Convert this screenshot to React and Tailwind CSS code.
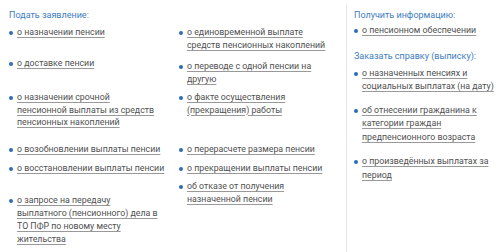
import React from 'react';

const font = { fontFamily: 'Roboto, "Liberation Sans", sans-serif' };

// lines are written out so wrapping matches the original exactly
const Item = ({ lines, className = '' }) => (
    <div className={`flex items-start ${className}`}>
        <span className="mt-[5px] mr-[4px] h-[4px] w-[4px] shrink-0 rounded-full bg-[#2e6cb3]" />
        <a href="#" className="whitespace-nowrap text-[#505050] underline decoration-[#999] underline-offset-[2px]">
            {lines.map((line, i) => (
                <React.Fragment key={i}>
                    {i > 0 && <br />}
                    {line}
                </React.Fragment>
            ))}
        </a>
    </div>
);

const Title = ({ children, className = '' }) => (
    <h3 className={`text-[9px] leading-[14px] text-[#3e7dc1] ${className}`}>{children}</h3>
);

const App = () => {
    return (
        <div className="flex h-[252px] w-[500px] overflow-hidden bg-white text-[8.8px] leading-[12.5px]" style={font}>
            {/* left column */}
            <div className="flex w-[170px] flex-col pl-[9px] pt-[8px]">
                <Title>Подать заявление:</Title>
                <Item className="mt-[4px]" lines={['о назначении пенсии']} />
                <Item className="mt-[18px]" lines={['о доставке пенсии']} />
                <Item
                    className="mt-[22px]"
                    lines={['о назначении срочной', 'пенсионной выплаты из средств', 'пенсионных накоплений']}
                />
                <Item className="mt-[14px]" lines={['о возобновлении выплаты пенсии']} />
                <Item className="mt-[6.5px]" lines={['о восстановлении выплаты пенсии']} />
                <div className="mt-[20px] leading-[13px]">
                    <Item
                        lines={[
                            'о запросе на передачу',
                            'выплатного (пенсионного) дела в',
                            'ТО ПФР по новому месту',
                            'жительства',
                        ]}
                    />
                </div>
            </div>

            {/* middle column */}
            <div className="flex w-[176px] flex-col pl-[9px] pt-[26px]">
                <Item lines={['о единовременной выплате', 'средств пенсионных накоплений']} />
                <Item className="mt-[9px]" lines={['о переводе с одной пенсии на', 'другую']} />
                <Item className="mt-[6px]" lines={['о факте осуществления', '(прекращения) работы']} />
                <Item className="mt-[27px]" lines={['о перерасчете размера пенсии']} />
                <Item className="mt-[6.5px]" lines={['о прекращении выплаты пенсии']} />
                <Item className="mt-[5.5px]" lines={['об отказе от получения', 'назначенной пенсии']} />
            </div>

            {/* right column */}
            <div className="mt-[5px] flex flex-1 flex-col border-l border-[#e6e6e6] pl-[7px] pt-[3px] leading-[13.5px]">
                <Title>Получить информацию:</Title>
                <Item className="mt-[2px]" lines={['о пенсионном обеспечении']} />
                <Title className="mt-[11px]">Заказать справку (выписку):</Title>
                <Item className="mt-[4px]" lines={['о назначенных пенсиях и', 'социальных выплатах (на дату)']} />
                <Item
                    className="mt-[10px]"
                    lines={['об отнесении гражданина к', 'категории граждан', 'предпенсионного возраста']}
                />
                <Item className="mt-[11px]" lines={['о произведённых выплатах за', 'период']} />
            </div>
        </div>
    );
};

export default App;
